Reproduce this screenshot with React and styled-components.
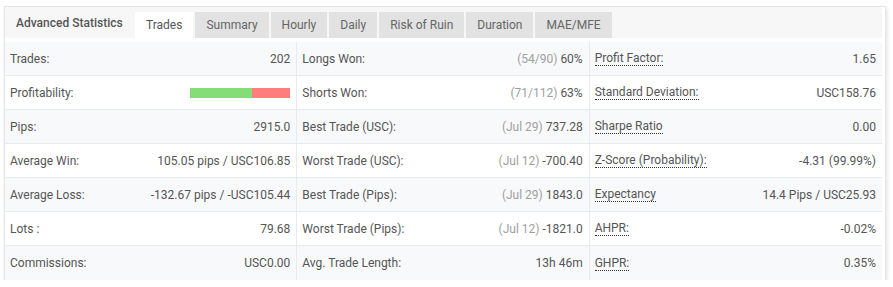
import styled, { createGlobalStyle } from 'styled-components';

const GlobalStyle = createGlobalStyle`
  body {
    margin: 0;
    background: #fff;
    font-family: Roboto, 'Liberation Sans', sans-serif;
  }
`;

const Page = styled.div`
  padding: 6px 7px 0 4px;
`;

const Card = styled.section`
  border: 1px solid #e6e6e6;
  border-bottom: none;
  background: #fff;
  box-shadow: 1px 2px 4px rgba(0, 0, 0, 0.12);
  padding-right: 3px;
`;

const Header = styled.div`
  display: flex;
  align-items: flex-end;
  height: 31px;
  background: #f7f7f7;
`;

const Title = styled.div`
  align-self: stretch;
  flex-shrink: 0;
  box-sizing: border-box;
  width: 130px;
  display: flex;
  align-items: center;
  padding: 0 0 0 11px;
  font-size: 12px;
  font-weight: 500;
  color: #555;
  white-space: nowrap;
`;

const Tabs = styled.div`
  display: flex;
  gap: 2px;
`;

const Tab = styled.div`
  height: 26px;
  display: flex;
  align-items: center;
  padding: 0 11px;
  font-size: 12px;
  white-space: nowrap;
  color: ${(p) => (p.$active ? '#555' : '#666')};
  background: ${(p) => (p.$active ? '#fff' : '#e2e2e2')};
`;

const Table = styled.div`
  display: grid;
  grid-template-columns: repeat(3, 1fr);
  margin-top: 4px;
`;

const Cell = styled.div`
  display: flex;
  align-items: center;
  justify-content: space-between;
  height: 34px;
  box-sizing: border-box;
  padding: 0 6px 0 5px;
  font-size: 12px;
  color: #555;
  background: ${(p) => (p.$odd ? '#f8f9fa' : '#fff')};
  border-right: ${(p) => (p.$last ? 'none' : '1px solid #e6ebf0')};
  border-bottom: ${(p) => (p.$bottom ? 'none' : '1px solid #e6ebf0')};
`;

const Label = styled.span`
  white-space: nowrap;
  ${(p) =>
    p.$tip &&
    `
    border-bottom: 1px dotted #333;
    line-height: 14px;
  `}
`;

const Value = styled.span`
  white-space: nowrap;
`;

const Muted = styled.span`
  color: #a0a0a0;
`;

const Bar = styled.div`
  display: flex;
  width: 100px;
  height: 10px;
`;

const Segment = styled.div`
  height: 100%;
  background: ${(p) => p.$color};
`;

const tabs = ['Trades', 'Summary', 'Hourly', 'Daily', 'Risk of Ruin', 'Duration', 'MAE/MFE'];

const rows = [
  [
    { label: 'Trades:', value: '202' },
    { label: 'Longs Won:', muted: '(54/90)', value: '60%' },
    { label: 'Profit Factor:', value: '1.65', tip: true },
  ],
  [
    { label: 'Profitability:', bar: 62 },
    { label: 'Shorts Won:', muted: '(71/112)', value: '63%' },
    { label: 'Standard Deviation:', value: 'USC158.76', tip: true },
  ],
  [
    { label: 'Pips:', value: '2915.0' },
    { label: 'Best Trade (USC):', muted: '(Jul 29)', value: '737.28' },
    { label: 'Sharpe Ratio', value: '0.00', tip: true },
  ],
  [
    { label: 'Average Win:', value: '105.05 pips / USC106.85' },
    { label: 'Worst Trade (USC):', muted: '(Jul 12)', value: '-700.40' },
    { label: 'Z-Score (Probability):', value: '-4.31 (99.99%)', tip: true },
  ],
  [
    { label: 'Average Loss:', value: '-132.67 pips / -USC105.44' },
    { label: 'Best Trade (Pips):', muted: '(Jul 29)', value: '1843.0' },
    { label: 'Expectancy', value: '14.4 Pips / USC25.93', tip: true },
  ],
  [
    { label: 'Lots :', value: '79.68' },
    { label: 'Worst Trade (Pips):', muted: '(Jul 12)', value: '-1821.0' },
    { label: 'AHPR:', value: '-0.02%', tip: true },
  ],
  [
    { label: 'Commissions:', value: 'USC0.00' },
    { label: 'Avg. Trade Length:', value: '13h 46m' },
    { label: 'GHPR:', value: '0.35%', tip: true },
  ],
];

export default function App() {
  return (
    <>
      <GlobalStyle />
      <Page>
        <Card>
          <Header>
            <Title>Advanced Statistics</Title>
            <Tabs>
              {tabs.map((t, i) => (
                <Tab key={t} $active={i === 0}>
                  {t}
                </Tab>
              ))}
            </Tabs>
          </Header>
          <Table>
            {rows.map((row, r) =>
              row.map((c, i) => (
                <Cell
                  key={r + '-' + i}
                  $odd={r % 2 === 0}
                  $last={i === 2}
                  $bottom={r === rows.length - 1}
                >
                  <Label $tip={c.tip}>{c.label}</Label>
                  {c.bar ? (
                    <Bar>
                      <Segment $color="#84dd76" style={{ width: c.bar + '%' }} />
                      <Segment $color="#ff7d7d" style={{ width: 100 - c.bar + '%' }} />
                    </Bar>
                  ) : (
                    <Value>
                      {c.muted && <Muted>{c.muted} </Muted>}
                      {c.value}
                    </Value>
                  )}
                </Cell>
              ))
            )}
          </Table>
        </Card>
      </Page>
    </>
  );
}
